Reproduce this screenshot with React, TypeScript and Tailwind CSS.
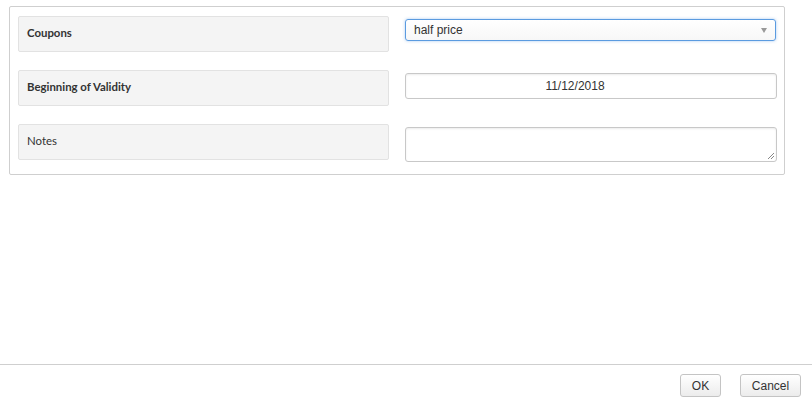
import React from 'react';

const labelBox =
  'h-[36px] rounded-[2px] border border-[#e2e2e2] bg-[#f4f4f4] pl-[8px] pt-[7px] text-[11.4px] text-[#333] font-["Lato",sans-serif]';

const fieldBase =
  'w-full rounded-[3px] border border-[#c8c8c8] bg-white text-[12px] text-[#333] font-["Liberation_Sans",Arial,sans-serif] shadow-[inset_0_1px_2px_rgba(0,0,0,0.08)]';

export default function App() {
  return (
    <div className="relative h-[411px] w-[812px] bg-white">
      <div className="pl-[9px] pt-[6px]">
        <div className="w-[776px] rounded-[2px] border border-[#cfcfcf] px-[8px] pb-[12px] pt-[9px]">
          <div className="grid grid-cols-[371px_372px] gap-x-[16px] gap-y-[18px]">
            <div className={`${labelBox} font-bold`}>Coupons</div>
            <div className="pt-[3px]">
              <div className="flex h-[22px] w-[371px] items-center justify-between rounded-[3px] border border-[#5b9be0] bg-gradient-to-b from-white to-[#f7f7f7] pl-[8px] pr-[8px] text-[12px] text-[#333] font-['Liberation_Sans',Arial,sans-serif] shadow-[0_0_3px_rgba(80,150,230,0.5)]">
                <span>half price</span>
                <span className="h-0 w-0 border-l-[3px] border-r-[3px] border-t-[5px] border-l-transparent border-r-transparent border-t-[#999]" />
              </div>
            </div>

            <div className={`${labelBox} font-bold`}>Beginning of Validity</div>
            <div className="pt-[3px]">
              <div className={`${fieldBase} flex h-[26px] items-center justify-center pr-[32px]`}>11/12/2018</div>
            </div>

            <div className={labelBox}>Notes</div>
            <div className="pt-[3px]">
              <div className={`${fieldBase} relative h-[35px]`}>
                <svg className="absolute bottom-[1px] right-[1px]" width="8" height="8" viewBox="0 0 8 8">
                  <path d="M7 1 L1 7 M7 4 L4 7" stroke="#888" strokeWidth="1" fill="none" />
                </svg>
              </div>
            </div>
          </div>
        </div>
      </div>

      <div className="absolute left-0 right-0 top-[364px] border-t border-[#cfcfcf]">
        <div className="flex justify-end gap-[19px] pr-[11px] pt-[9px]">
          <button className="h-[23px] w-[41px] rounded-[3px] border border-[#c4c4c4] bg-gradient-to-b from-white to-[#ececec] text-[12px] text-[#333] font-['Liberation_Sans',Arial,sans-serif]">
            OK
          </button>
          <button className="h-[23px] w-[61px] rounded-[3px] border border-[#c4c4c4] bg-gradient-to-b from-white to-[#ececec] text-[12px] text-[#333] font-['Liberation_Sans',Arial,sans-serif]">
            Cancel
          </button>
        </div>
      </div>
    </div>
  );
}
